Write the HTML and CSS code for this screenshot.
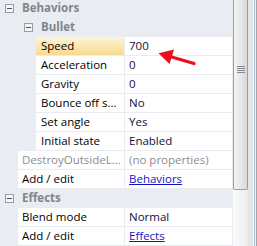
FILE: index.html
```html
<!DOCTYPE html>
<html lang="en">
  <head>
    <meta charset="UTF-8" />
    <title>Properties</title>
    <link rel="stylesheet" href="styles.css">
  </head>

  <body>
    <div class="panel">
      <div class="grid">
        <div class="cat"><span class="toggle"></span>Behaviors</div>
        <div class="cat sub"><span class="toggle"></span>Bullet</div>
        <div class="prop deep selected">
          <div class="name">Speed</div>
          <div class="value">700</div>
        </div>
        <div class="prop deep">
          <div class="name">Acceleration</div>
          <div class="value">0</div>
        </div>
        <div class="prop deep">
          <div class="name">Gravity</div>
          <div class="value">0</div>
        </div>
        <div class="prop deep">
          <div class="name">Bounce off s...</div>
          <div class="value">No</div>
        </div>
        <div class="prop deep">
          <div class="name">Set angle</div>
          <div class="value">Yes</div>
        </div>
        <div class="prop deep">
          <div class="name">Initial state</div>
          <div class="value">Enabled</div>
        </div>
        <div class="prop">
          <div class="name muted">DestroyOutsideL...</div>
          <div class="value muted">(no properties)</div>
        </div>
        <div class="prop">
          <div class="name">Add / edit</div>
          <div class="value"><a class="link">Behaviors</a></div>
        </div>
        <div class="cat"><span class="toggle"></span>Effects</div>
        <div class="prop">
          <div class="name">Blend mode</div>
          <div class="value">Normal</div>
        </div>
        <div class="prop">
          <div class="name">Add / edit</div>
          <div class="value"><a class="link">Effects</a></div>
        </div>
      </div>
      <div class="scrollbar">
        <div class="track">
          <div class="thumb"><span class="grip"></span></div>
        </div>
        <div class="edge"></div>
      </div>
      <!-- red arrow pointing at the Speed value -->
      <svg class="arrow" width="50" height="24" viewBox="150 44 50 24">
        <line x1="194" y1="63.5" x2="170" y2="56.5" stroke="#e8101a" stroke-width="3.2" stroke-linecap="round" />
        <polygon points="158.5,53.2 174,49.6 169.5,64" fill="#e8101a" />
      </svg>
    </div>
  </body>
</html>
```

FILE: styles.css
```css
html,
body {
  margin: 0;
  padding: 0;
}

body {
  font-family: "Open Sans", "Liberation Sans", sans-serif;
  font-size: 11.5px;
  color: #000;
}

.panel {
  position: relative;
  display: flex;
  width: 257px;
  height: 246px;
  overflow: hidden;
  background-color: #e9ecf0;
}

.grid {
  flex: none;
  width: 232px;
  padding-right: 1px;
  margin-top: -1px;
  display: flex;
  flex-direction: column;
}

.cat,
.prop {
  flex: none;
  display: flex;
  height: 18px;
  line-height: 18px;
  margin-bottom: 1px;
  white-space: nowrap;
}

.cat {
  align-items: center;
  padding-left: 5px;
  font-weight: bold;
  color: #80858f;
}

.cat.sub {
  padding-left: 24px;
}

.toggle {
  position: relative;
  box-sizing: border-box;
  width: 9px;
  height: 9px;
  margin-right: 8px;
  border: 1px solid #979ca5;
  background-color: #f4f5f7;
}

.toggle::after {
  content: "";
  position: absolute;
  left: 1px;
  top: 3px;
  width: 5px;
  height: 1px;
  background-color: #4a4f58;
}

.prop {
  padding-left: 18px;
}

.prop.deep {
  padding-left: 36px;
}

.prop .name {
  flex: 1;
  min-width: 0;
  padding-left: 4px;
  background-color: #fff;
}

.prop.deep .name {
  padding-left: 5px;
}

.prop.selected .name {
  background: linear-gradient(#fdf4da, #f6da8e);
}

.prop .value {
  flex: none;
  box-sizing: border-box;
  width: 107px;
  margin-left: 1px;
  padding-left: 4px;
  background-color: #fff;
  color: #10103c;
}

.prop .muted {
  color: #8a8d94;
}

.link {
  color: #1515c8;
  text-decoration: underline;
  cursor: pointer;
}

.scrollbar {
  flex: none;
  display: flex;
  width: 24px;
  background-color: #e9ecf0;
}

.track {
  width: 20px;
  background: linear-gradient(to right, #fbfbfb, #eeeeee 14px, #e6e6e6 15px, #e4e4e4);
}

.thumb {
  box-sizing: border-box;
  display: flex;
  flex-direction: column;
  align-items: center;
  width: 15px;
  height: 190px;
  border: 1px solid #9b9ea4;
  border-top: none;
  border-radius: 0 0 2px 2px;
  background: linear-gradient(to right, #f4f4f4, #e6e6e6 60%, #d8d8d8);
}

.grip {
  width: 8px;
  height: 7px;
  margin-top: 66px;
  background: repeating-linear-gradient(#848890 0 1px, transparent 1px 2px);
}

.edge {
  width: 4px;
  background: linear-gradient(to right, #f6f6f6 0 1px, #b3c2de 1px 2px, #e8ebf0 2px 3px, #a2a5ab 3px);
}

.arrow {
  position: absolute;
  left: 150px;
  top: 44px;
}
```
